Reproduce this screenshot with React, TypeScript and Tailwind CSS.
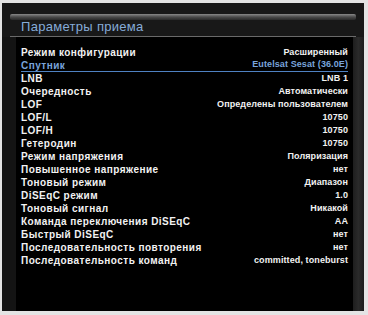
const rows: [string, string][] = [
  ['Режим конфигурации', 'Расширенный'],
  ['Спутник', 'Eutelsat Sesat (36.0E)'],
  ['LNB', 'LNB 1'],
  ['Очередность', 'Автоматически'],
  ['LOF', 'Определены пользователем'],
  ['LOF/L', '10750'],
  ['LOF/H', '10750'],
  ['Гетеродин', '10750'],
  ['Режим напряжения', 'Поляризация'],
  ['Повышенное напряжение', 'нет'],
  ['Тоновый режим', 'Диапазон'],
  ['DiSEqC режим', '1.0'],
  ['Тоновый сигнал', 'Никакой'],
  ['Команда переключения DiSEqC', 'AA'],
  ['Быстрый DiSEqC', 'нет'],
  ['Последовательность повторения', 'нет'],
  ['Последовательность команд', 'committed, toneburst'],
];

export default function App() {
  return (
    <div
      className="w-[368px] h-[315px] bg-[#e4e4e4] pt-[3px] pl-[2px] pr-[4px] pb-[4px]"
      style={{ fontFamily: '"Liberation Sans", Arial, sans-serif' }}
    >
      <div className="w-full h-full bg-[#181818] flex flex-col">
        {/* header */}
        <div className="h-[34px] flex flex-col px-[8px]">
          <div className="mt-[11px] h-[6px] rounded-[2px] bg-gradient-to-b from-[#8a8a8a] via-[#4a4a4a] to-[#2a2a2a]" />
          <div className="pl-[11px] h-[13px] leading-[13px] text-[13px] text-[#86acd8] tracking-[0.3px]">
            Параметры приема
          </div>
          <div className="mt-[3px] h-[1px] bg-[#6a6a6a]" />
        </div>

        {/* body */}
        <div className="flex-1 flex">
          <div className="w-[14px] bg-[#141414]" />
          <div className="w-[337px] bg-black pt-[9px] px-[5px]">
            {rows.map(([label, value], i) => (
              <div
                key={label}
                className={
                  i === 1
                    ? 'h-[13px] flex items-center justify-between border-b border-[#4f82c2] text-[#79a4dc]'
                    : 'h-[13px] flex items-center justify-between text-[#f2f2f2]'
                }
              >
                <span className="text-[10px] font-bold tracking-[0.45px] whitespace-nowrap">{label}</span>
                <span className="text-[9px] font-bold tracking-[0.1px] whitespace-nowrap">{value}</span>
              </div>
            ))}
          </div>
          <div className="flex-1 bg-gradient-to-r from-[#1e1e1e] via-[#2a2a2a] to-[#1c1c1c]" />
        </div>
      </div>
    </div>
  );
}
